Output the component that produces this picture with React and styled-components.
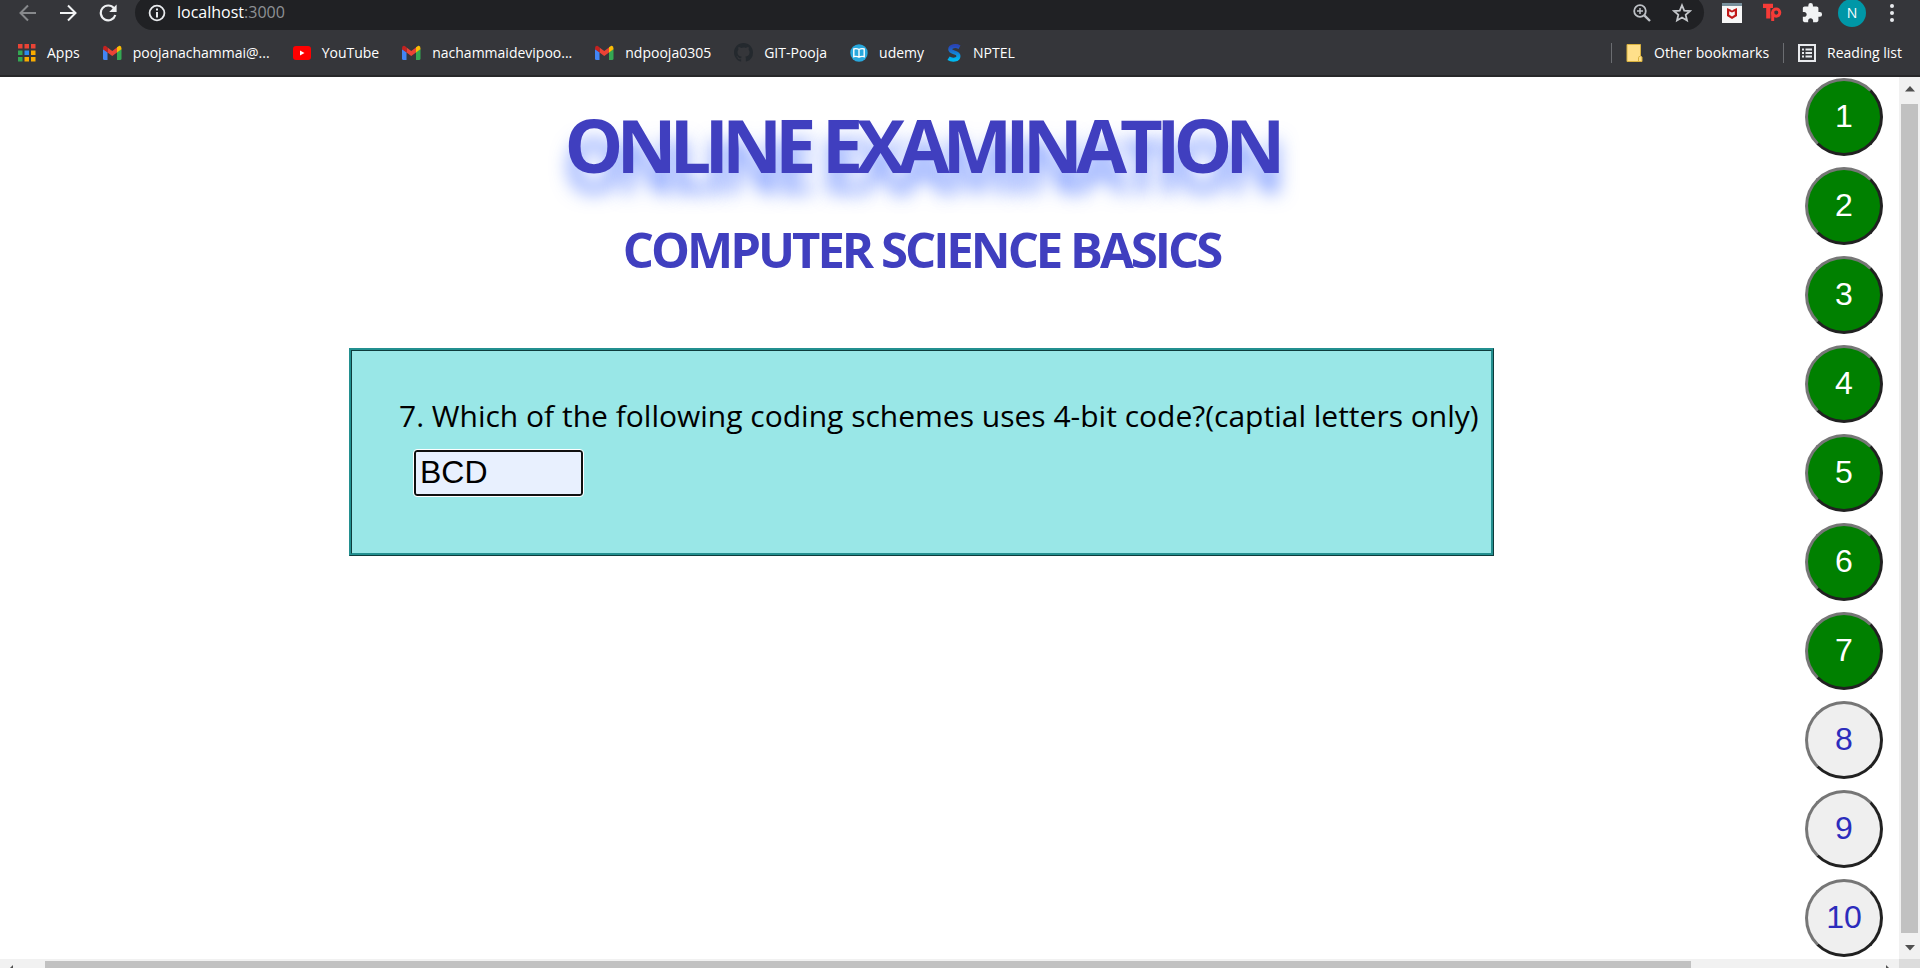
import React, { useState } from 'react';
import styled, { createGlobalStyle } from 'styled-components';

const ui = '"Open Sans", "Noto Sans", sans-serif';
const arial = '"Liberation Sans", Arial, sans-serif';

const GlobalStyle = createGlobalStyle`
  * { box-sizing: border-box; }
  html, body { margin: 0; padding: 0; overflow: hidden; background: #fff; }
  body { font-family: ${ui}; }
  button { font: inherit; cursor: pointer; }
  svg { display: block; flex: none; }
`;

const Window = styled.div`
  display: flex;
  flex-direction: column;
  height: 100vh;
  overflow: hidden;
`;

const Toolbar = styled.header`
  display: flex;
  align-items: flex-end;
  height: 30px;
  flex: none;
  background: #35363a;
  padding-left: 8px;
  padding-right: 8px;
  overflow: hidden;
`;

const ToolButton = styled.button`
  display: flex;
  align-items: center;
  justify-content: center;
  flex: none;
  width: 40px;
  height: 35px;
  padding: 0;
  border: 0;
  background: none;
`;

const Omnibox = styled.div`
  display: flex;
  align-items: center;
  flex: 1;
  height: 35px;
  margin-left: 7px;
  margin-right: 8px;
  padding-left: 13px;
  padding-right: 2px;
  border-radius: 18px;
  background: #202124;
`;

const Address = styled.div`
  flex: 1;
  margin-left: 11px;
  font-size: 16px;
  line-height: 35px;
  color: #fff;
  span { color: #8e9195; }
`;

const Avatar = styled.span`
  width: 28px;
  height: 28px;
  border-radius: 50%;
  background: #0097a7;
  color: #fff;
  font: 14px/28px ${ui};
  text-align: center;
`;

const BookmarkBar = styled.nav`
  display: flex;
  align-items: center;
  justify-content: space-between;
  height: 47px;
  flex: none;
  padding: 0 18px;
  background: #35363a;
  border-bottom: 2px solid #272729;
`;

const BookmarkGroup = styled.div`
  display: flex;
  align-items: center;
  gap: ${p => p.$gap}px;
`;

const Bookmark = styled.a`
  display: flex;
  align-items: center;
  gap: 11px;
  color: #fff;
  text-decoration: none;
  font-size: 14px;
  line-height: 20px;
  white-space: nowrap;
`;

const Divider = styled.span`
  width: 1px;
  height: 20px;
  background: #6b6d71;
`;

const Viewport = styled.div`
  display: grid;
  grid-template-columns: 1fr 21px;
  grid-template-rows: 1fr 9px;
  flex: 1;
  min-height: 0;
`;

const Page = styled.div`
  display: flex;
  min-width: 0;
  overflow: hidden;
`;

const Main = styled.main`
  display: flex;
  flex-direction: column;
  align-items: center;
  flex: 1;
  padding-left: 38px;
  padding-top: 18px;
`;

const Title = styled.h1`
  margin: 0;
  font-size: 74px;
  line-height: 100px;
  letter-spacing: -7px;
  font-weight: 700;
  color: #403fbf;
  text-shadow: 0 20px 18px rgba(60, 105, 255, 0.6);
`;

const Subtitle = styled.h2`
  margin: 20px 0 0;
  font-size: 49px;
  line-height: 68px;
  letter-spacing: -3px;
  font-weight: 700;
  color: #403fbf;
`;

const Card = styled.section`
  width: 64.8%;
  margin-top: 65px;
  padding: 44px 12px 57px 47px;
  background: #99e7e7;
  border: 3px ridge #239090;
  color: #000;
`;

const Question = styled.label`
  display: block;
  font-size: 30px;
  line-height: 42px;
  white-space: nowrap;
`;

const Answer = styled.input`
  display: block;
  width: 169px;
  height: 46px;
  margin: 13px 0 0 15px;
  padding: 0 4px 2px;
  border: 2px solid #101010;
  border-radius: 3px;
  outline: 1px solid #fff;
  background: #e8f0fe;
  font: 32px ${arial};
  color: #000;
`;

const Rail = styled.aside`
  display: flex;
  flex-direction: column;
  gap: 11px;
  padding: 1px 16px 0 0;
`;

const NumberButton = styled.button`
  flex: none;
  width: 78px;
  height: 78px;
  padding: 0 0 2px;
  border-style: solid;
  border-width: 3px;
  border-color: #767676 #212121 #212121 #767676;
  border-radius: 50%;
  background: ${p => (p.$done ? '#008000' : '#efefef')};
  color: ${p => (p.$done ? '#fff' : '#2c2cbc')};
  font: 32px ${arial};
`;

const VTrack = styled.div`
  display: flex;
  flex-direction: column;
  align-items: center;
  padding: 9px 0 8px;
  gap: 12px;
  background: #f1f1f1;
`;

const VThumb = styled.div`
  flex: 1;
  width: 17px;
  background: #c1c1c1;
`;

const HTrack = styled.div`
  display: flex;
  padding: 2px 9px 0 9px;
  background: #f1f1f1;
`;

const HThumb = styled.div`
  width: 87.5%;
  margin-left: 32px;
  margin-right: auto;
  background: #c1c1c1;
`;

const HArrow = styled.svg`
  margin-top: 4px;
`;

const Corner = styled.div`
  background: #dcdcdc;
`;

const ArrowIcon = ({ color, flip }) => (
  <svg width="18" height="18" viewBox="0 0 18 18" fill="none" stroke={color} strokeWidth="2">
    <path d={flip ? 'M1 9H16M9 1.5L16.5 9L9 16.5' : 'M17 9H2M9 1.5L1.5 9L9 16.5'} />
  </svg>
);

const ReloadIcon = () => (
  <svg width="18" height="18" viewBox="0 0 18 18">
    <path d="M15 4.3A7.4 7.4 0 1 0 16.3 11" fill="none" stroke="#eef0f2" strokeWidth="2.2" />
    <path d="M17.6 .6V8H10.2Z" fill="#eef0f2" />
  </svg>
);

const InfoIcon = () => (
  <svg width="18" height="18" viewBox="0 0 18 18">
    <circle cx="9" cy="9" r="7.4" fill="none" stroke="#e8eaed" strokeWidth="1.8" />
    <path d="M8 4.6h2v2H8zM8 8h2v5.4H8z" fill="#e8eaed" />
  </svg>
);

const ZoomIcon = () => (
  <svg width="18" height="18" viewBox="0 0 18 18" fill="none" stroke="#bdc1c6">
    <circle cx="7" cy="7" r="5.8" strokeWidth="1.8" />
    <path d="M11.3 11.3L17 17" strokeWidth="2.4" />
    <path d="M4 7H10M7 4V10" strokeWidth="1.5" />
  </svg>
);

const StarIcon = () => (
  <svg width="20" height="20" viewBox="0 0 18 18" fill="none" stroke="#c4c7cb" strokeWidth="1.6">
    <path d="M9 2L11 6.8L16.2 7.2L12.3 10.6L13.5 15.7L9 13L4.5 15.7L5.7 10.6L1.8 7.2L7 6.8Z" />
  </svg>
);

const ShieldIcon = () => (
  <svg width="20" height="20" viewBox="0 0 20 20">
    <rect width="20" height="20" fill="#f7f7f7" />
    <rect width="20" height="3" fill="#78909c" />
    <path d="M5 5L10 7.3L15 5V13L10 16L5 13Z" fill="#c01818" />
    <path d="M7.2 8.2L10 9.6L12.8 8.2V11.8L10 13.4L7.2 11.8Z" fill="#f7f7f7" />
    <path d="M9 4h2v3l-1 .5L9 7z" fill="#f7f7f7" />
  </svg>
);

const TpIcon = () => (
  <svg width="20" height="20" viewBox="0 0 20 20">
    <path d="M1 2.8H11M6.3 3V15.5" fill="none" stroke="#f53b37" strokeWidth="4.2" />
    <circle cx="14.2" cy="9.6" r="3.6" fill="none" stroke="#f53b37" strokeWidth="3" />
    <path d="M10.7 9V18" stroke="#f53b37" strokeWidth="3" />
  </svg>
);

const PuzzleIcon = () => (
  <svg width="22" height="22" viewBox="0 0 24 24" fill="#f1f3f4">
    <path d="M20.5 11H19V7c0-1.1-.9-2-2-2h-4V3.5a2.5 2.5 0 0 0-5 0V5H4c-1.1 0-2 .9-2 2v3.8h1.5c1.5 0 2.7 1.2 2.7 2.7S5 16.2 3.5 16.2H2V20c0 1.1.9 2 2 2h3.8v-1.5c0-1.5 1.2-2.7 2.7-2.7s2.7 1.2 2.7 2.7V22H17c1.1 0 2-.9 2-2v-4h1.5a2.5 2.5 0 0 0 0-5z" />
  </svg>
);

const DotsIcon = () => (
  <svg width="4" height="18" viewBox="0 0 4 18" fill="#e8eaed">
    <circle cx="2" cy="2" r="2" /><circle cx="2" cy="9" r="2" /><circle cx="2" cy="16" r="2" />
  </svg>
);

const appColors = ['#ea4335', '#ea4335', '#ea4335', '#34a853', '#2a8cf0', '#f9ab00', '#34a853', '#f9ab00', '#f9ab00'];
const AppsIcon = () => (
  <svg width="18" height="18" viewBox="0 0 18 18">
    {appColors.map((c, i) => (
      <rect key={i} x={(i % 3) * 6.5} y={Math.floor(i / 3) * 6.5} width="4.5" height="4.5" fill={c} />
    ))}
  </svg>
);

const GmailIcon = () => (
  <svg width="19" height="16" viewBox="0 0 19 16">
    <path d="M0 4L4.5 7V15H1.5Q0 15 0 13.5Z" fill="#4285f4" />
    <path d="M18.5 4L14 7V15H17Q18.5 15 18.5 13.5Z" fill="#34a853" />
    <path d="M4.5 2.5L9.25 6L14 2.5V7.5L9.25 11L4.5 7.5Z" fill="#ea4335" />
    <path d="M0 3.5Q0 .5 2.2 .8L4.5 2.3V7.5L0 4.2Z" fill="#c5221f" />
    <path d="M18.5 3.5Q18.5 .5 16.3 .8L14 2.3V7.5L18.5 4.2Z" fill="#fbbc04" />
  </svg>
);

const YouTubeIcon = () => (
  <svg width="18" height="14" viewBox="0 0 18 14">
    <rect width="18" height="14" rx="3" fill="#f00" />
    <path d="M7 4.5V9.5L11.5 7Z" fill="#fff" />
  </svg>
);

const GitHubIcon = () => (
  <svg width="19" height="19" viewBox="0 0 16 16" fill="#24292e">
    <path d="M8 0C3.58 0 0 3.58 0 8c0 3.54 2.29 6.53 5.47 7.59.4.07.55-.17.55-.38 0-.19-.01-.82-.01-1.49-2.01.37-2.53-.49-2.69-.94-.09-.23-.48-.94-.82-1.13-.28-.15-.68-.52-.01-.53.63-.01 1.08.58 1.23.82.72 1.21 1.87.87 2.33.66.07-.52.28-.87.51-1.07-1.78-.2-3.64-.89-3.64-3.95 0-.87.31-1.59.82-2.15-.08-.2-.36-1.02.08-2.12 0 0 .67-.21 2.2.82A7.6 7.6 0 0 1 8 3.86c.68 0 1.36.09 2 .27 1.53-1.04 2.2-.82 2.2-.82.44 1.1.16 1.92.08 2.12.51.56.82 1.27.82 2.15 0 3.07-1.87 3.75-3.65 3.95.29.25.54.73.54 1.48 0 1.07-.01 1.93-.01 2.2 0 .21.15.46.55.38A8 8 0 0 0 16 8c0-4.42-3.58-8-8-8z" />
  </svg>
);

const UdemyIcon = () => (
  <svg width="18" height="18" viewBox="0 0 18 18">
    <circle cx="9" cy="9" r="8.7" fill="#29a8dd" />
    <path d="M9 5.5Q6.5 4 3.8 5V12.7Q6.5 11.8 9 13.2Q11.5 11.8 14.2 12.7V5Q11.5 4 9 5.5ZM9 5.5V13" fill="none" stroke="#fff" strokeWidth="1.4" />
  </svg>
);

const SwirlIcon = () => (
  <svg width="15" height="18" viewBox="0 0 15 18">
    <defs>
      <linearGradient id="swirl" x1="0" y1="0" x2="0" y2="1">
        <stop offset="0" stopColor="#2945b8" />
        <stop offset="1" stopColor="#00b8f0" />
      </linearGradient>
    </defs>
    <path d="M12.5 3.2C9 1.2 3.2 2 3.2 5.3C3.2 9.2 11.5 7.5 11.5 12C11.5 16.3 5 16.5 1.5 14.3" fill="none" stroke="url(#swirl)" strokeWidth="4" />
  </svg>
);

const FolderIcon = () => (
  <svg width="17" height="18" viewBox="0 0 17 18">
    <path d="M1 .5H14.5V12L16 13V17.5H1Z" fill="#ffe08a" stroke="#d9b23f" />
    <path d="M12.5 17V13.5Q12.5 12.5 14 12.5" fill="none" stroke="#d9b23f" />
  </svg>
);

const ReadingIcon = () => (
  <svg width="18" height="18" viewBox="0 0 18 18" fill="none" stroke="#e8eaed">
    <rect x="1" y="1" width="16" height="16" strokeWidth="2" />
    <path d="M4 5.5H6M4 9H6M4 12.5H6M7.5 5.5H14M7.5 9H14M7.5 12.5H14" strokeWidth="1.8" />
  </svg>
);

const ScrollArrow = ({ down }) => (
  <svg width="10" height="6" viewBox="0 0 10 6" fill="#505050">
    <path d={down ? 'M0 0H10L5 5.5Z' : 'M0 5.5H10L5 0Z'} />
  </svg>
);

const bookmarks = [
  { label: 'Apps', Icon: AppsIcon },
  { label: 'poojanachammai@...', Icon: GmailIcon },
  { label: 'YouTube', Icon: YouTubeIcon },
  { label: 'nachammaidevipoo...', Icon: GmailIcon },
  { label: 'ndpooja0305', Icon: GmailIcon },
  { label: 'GIT-Pooja', Icon: GitHubIcon },
  { label: 'udemy', Icon: UdemyIcon },
  { label: 'NPTEL', Icon: SwirlIcon },
];

const questions = [1, 2, 3, 4, 5, 6, 7, 8, 9, 10];

export default function App() {
  const [answer, setAnswer] = useState('BCD');
  return (
    <Window>
      <GlobalStyle />
      <Toolbar>
        <ToolButton aria-label="Back"><ArrowIcon color="#87898c" /></ToolButton>
        <ToolButton aria-label="Forward"><ArrowIcon color="#f1f3f4" flip /></ToolButton>
        <ToolButton aria-label="Reload"><ReloadIcon /></ToolButton>
        <Omnibox>
          <InfoIcon />
          <Address>localhost<span>:3000</span></Address>
          <ToolButton aria-label="Zoom"><ZoomIcon /></ToolButton>
          <ToolButton aria-label="Bookmark this page"><StarIcon /></ToolButton>
        </Omnibox>
        <ToolButton aria-label="Shield extension"><ShieldIcon /></ToolButton>
        <ToolButton aria-label="Tp extension"><TpIcon /></ToolButton>
        <ToolButton aria-label="Extensions"><PuzzleIcon /></ToolButton>
        <ToolButton aria-label="Profile"><Avatar>N</Avatar></ToolButton>
        <ToolButton aria-label="Menu"><DotsIcon /></ToolButton>
      </Toolbar>
      <BookmarkBar>
        <BookmarkGroup $gap={23}>
          {bookmarks.map(({ label, Icon }) => (
            <Bookmark key={label} href="#"><Icon />{label}</Bookmark>
          ))}
        </BookmarkGroup>
        <BookmarkGroup $gap={14}>
          <Divider />
          <Bookmark href="#"><FolderIcon />Other bookmarks</Bookmark>
          <Divider />
          <Bookmark href="#"><ReadingIcon />Reading list</Bookmark>
        </BookmarkGroup>
      </BookmarkBar>
      <Viewport>
        <Page>
          <Main>
            <Title>ONLINE EXAMINATION</Title>
            <Subtitle>COMPUTER SCIENCE BASICS</Subtitle>
            <Card>
              <Question htmlFor="answer">
                7. Which of the following coding schemes uses 4-bit code?(captial letters only)
              </Question>
              <Answer id="answer" type="text" value={answer} onChange={e => setAnswer(e.target.value)} />
            </Card>
          </Main>
          <Rail>
            {questions.map(n => (
              <NumberButton key={n} $done={n <= 7}>{n}</NumberButton>
            ))}
          </Rail>
        </Page>
        <VTrack><ScrollArrow /><VThumb /><ScrollArrow down /></VTrack>
        <HTrack>
          <HArrow width="4" height="6" viewBox="0 0 4 6" fill="#505050"><path d="M4 0V6H0V4Z" /></HArrow>
          <HThumb />
          <HArrow width="4" height="6" viewBox="0 0 4 6" fill="#505050"><path d="M0 0V6H4V4Z" /></HArrow>
        </HTrack>
        <Corner />
      </Viewport>
    </Window>
  );
}
